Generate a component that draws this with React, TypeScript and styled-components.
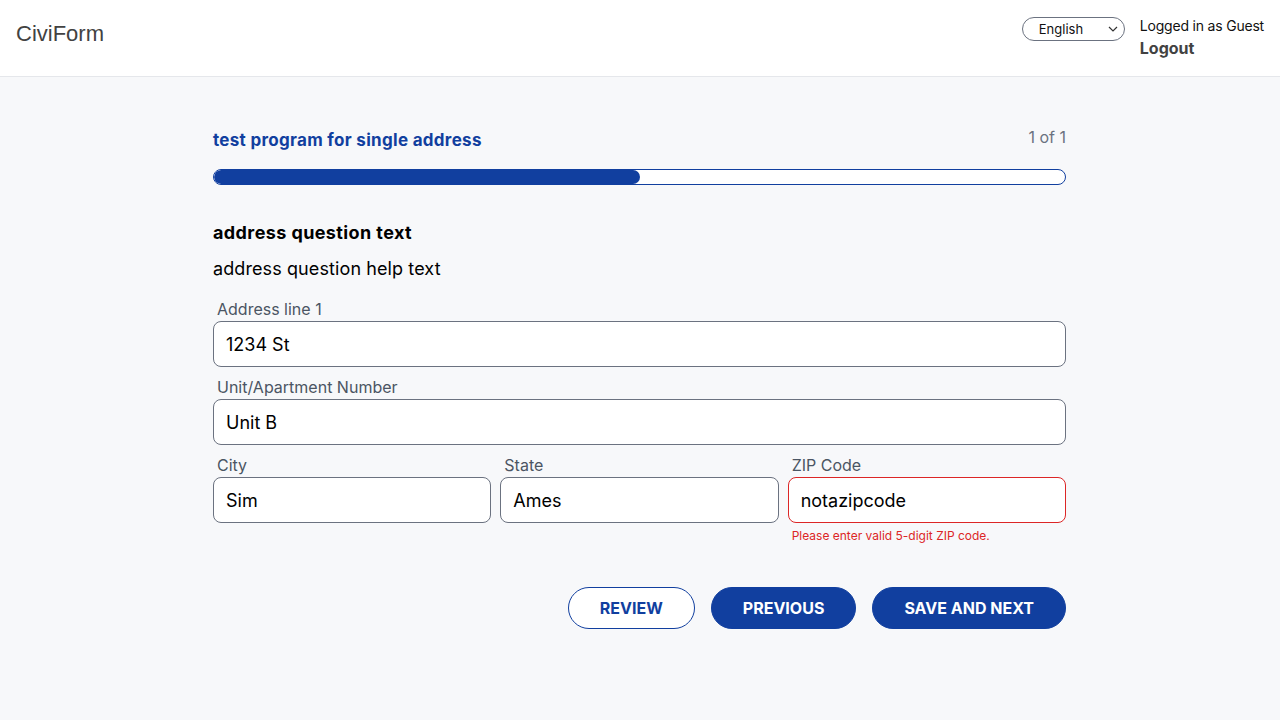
import styled, { createGlobalStyle } from "styled-components";

const GlobalStyle = createGlobalStyle`
  html, body {
    margin: 0;
    padding: 0;
    background: #f7f8fa;
    font-family: Inter, "Noto Sans", "Liberation Sans", sans-serif;
  }
  * { box-sizing: border-box; }
`;

const fields = [
  { label: "Address line 1", value: "1234 St" },
  { label: "Unit/Apartment Number", value: "Unit B" },
];

const row = [
  { label: "City", value: "Sim" },
  { label: "State", value: "Ames" },
  { label: "ZIP Code", value: "notazipcode", error: "Please enter valid 5-digit ZIP code." },
];

export default function App() {
  return (
    <>
      <GlobalStyle />
      <Header>
        <Brand>CiviForm</Brand>
        <HeaderRight>
          <LangSelect>
            <span>English</span>
            <svg width="10" height="6" viewBox="0 0 10 6">
              <path d="M1 1l4 4 4-4" fill="none" stroke="#333" strokeWidth="1.2" />
            </svg>
          </LangSelect>
          <UserBox>
            <LoggedIn>Logged in as Guest</LoggedIn>
            <Logout>Logout</Logout>
          </UserBox>
        </HeaderRight>
      </Header>

      <Main>
        <TitleRow>
          <ProgramTitle>test program for single address</ProgramTitle>
          <StepCount>1 of 1</StepCount>
        </TitleRow>
        <Progress>
          <ProgressFill style={{ width: "50%" }} />
        </Progress>

        <QuestionText>address question text</QuestionText>
        <HelpText>address question help text</HelpText>

        <Fields>
          {fields.map((f) => (
            <Field key={f.label}>
              <Label>{f.label}</Label>
              <Input defaultValue={f.value} />
            </Field>
          ))}
          <Row>
            {row.map((f) => (
              <Field key={f.label}>
                <Label>{f.label}</Label>
                <Input defaultValue={f.value} $error={!!f.error} />
                {f.error && <ErrorText>{f.error}</ErrorText>}
              </Field>
            ))}
          </Row>
        </Fields>

        <Actions>
          <Button $variant="outline">Review</Button>
          <Button>Previous</Button>
          <Button>Save and next</Button>
        </Actions>
      </Main>
    </>
  );
}

const Header = styled.header`
  height: 77px;
  background: #fff;
  border-bottom: 1px solid #e5e7eb;
  display: flex;
  align-items: center;
  justify-content: space-between;
  padding: 0 16px;
`;

const Brand = styled.div`
  font-family: "Liberation Sans", Arial, sans-serif;
  font-size: 22px;
  color: #424242;
  margin-top: -8px;
`;

const HeaderRight = styled.div`
  display: flex;
  align-items: flex-start;
  gap: 15px;
`;

const LangSelect = styled.div`
  width: 103px;
  height: 24px;
  border: 1px solid #6b7280;
  border-radius: 12px;
  background: #fff;
  display: flex;
  align-items: center;
  justify-content: space-between;
  padding: 0 6px 0 16px;
  font-size: 13px;
  color: #111;
`;

const UserBox = styled.div`
  display: flex;
  flex-direction: column;
  gap: 2px;
`;

const LoggedIn = styled.div`
  font-size: 14px;
  color: #111;
  line-height: 18px;
  letter-spacing: -0.2px;
`;

const Logout = styled.div`
  font-size: 16px;
  font-weight: 700;
  color: #424242;
  line-height: 22px;
`;

const Main = styled.main`
  width: 854px;
  margin: 0 auto;
  padding: 50px 1px 0 0;
`;

const TitleRow = styled.div`
  display: flex;
  justify-content: space-between;
  align-items: flex-start;
`;

const ProgramTitle = styled.div`
  font-size: 17px;
  font-weight: 700;
  color: #113f9f;
  line-height: 26px;
  letter-spacing: 0.3px;
`;

const StepCount = styled.div`
  font-size: 16px;
  color: #6b7280;
  line-height: 20px;
`;

const Progress = styled.div`
  margin-top: 16px;
  height: 16px;
  border: 1px solid #113f9f;
  border-radius: 8px;
  background: #fff;
  overflow: hidden;
`;

const ProgressFill = styled.div`
  height: 100%;
  background: #113f9f;
  border-radius: 8px;
`;

const QuestionText = styled.div`
  margin-top: 37px;
  font-size: 18px;
  font-weight: 700;
  color: #000;
  line-height: 22px;
  letter-spacing: 0.4px;
`;

const HelpText = styled.div`
  margin-top: 14px;
  font-size: 18px;
  color: #000;
  line-height: 22px;
  letter-spacing: 0.1px;
`;

const Fields = styled.div`
  margin-top: 18px;
  display: flex;
  flex-direction: column;
  gap: 9px;
`;

const Row = styled.div`
  display: grid;
  grid-template-columns: repeat(3, 1fr);
  gap: 9px;
`;

const Field = styled.div`
  display: flex;
  flex-direction: column;
  min-width: 0;
`;

const Label = styled.label`
  font-size: 16px;
  color: #4b5563;
  padding-left: 4px;
  line-height: 22px;
  margin-bottom: 1px;
`;

const Input = styled.input<{ $error?: boolean }>`
  height: 46px;
  width: 100%;
  border: 1px solid ${(p) => (p.$error ? "#dc2626" : "#6b7280")};
  border-radius: 8px;
  background: #fff;
  padding: 0 12px;
  font-family: inherit;
  font-size: 18px;
  color: #000;
  outline: none;
`;

const ErrorText = styled.div`
  font-size: 12px;
  color: #dc2626;
  padding-left: 4px;
  margin-top: 5px;
  line-height: 16px;
`;

const Actions = styled.div`
  margin-top: 43px;
  display: flex;
  justify-content: flex-end;
  gap: 16px;
`;

const Button = styled.button<{ $variant?: "outline" }>`
  height: 42px;
  padding: 0 31px;
  border-radius: 21px;
  font-family: inherit;
  font-size: 16px;
  font-weight: 700;
  text-transform: uppercase;
  cursor: pointer;
  border: 1px solid #113f9f;
  background: ${(p) => (p.$variant === "outline" ? "#fff" : "#113f9f")};
  color: ${(p) => (p.$variant === "outline" ? "#113f9f" : "#fff")};
`;
